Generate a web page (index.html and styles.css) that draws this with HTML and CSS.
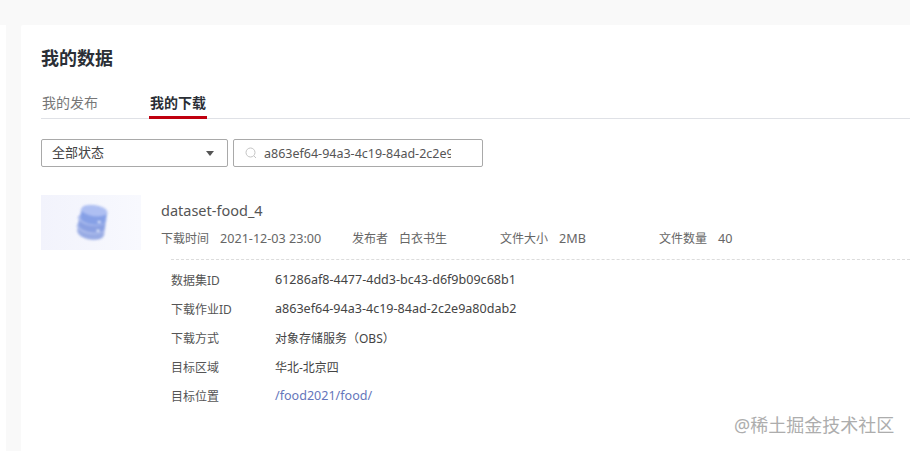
FILE: index.html
```html
<!DOCTYPE html>
<html lang="zh-CN">
<head>
<meta charset="utf-8">
<title>我的数据</title>
<link rel="stylesheet" href="styles.css">
</head>
<body>
<div class="page">
  <aside class="side"></aside>
  <main class="card">
    <h1 class="title">我的数据</h1>
    <nav class="tabs">
      <span class="tab">我的发布</span>
      <span class="tab active">我的下载</span>
    </nav>
    <div class="filters">
      <div class="select"><span>全部状态</span><i class="caret"></i></div>
      <div class="search">
        <svg class="search-icon" width="12" height="12" viewBox="0 0 12 12"><circle cx="5.5" cy="5.5" r="4.5" fill="none" stroke="#c4c4c4"/><path d="M9 9l2 2" stroke="#c4c4c4"/></svg>
        <span class="search-text">a863ef64-94a3-4c19-84ad-2c2e9a80dab2</span>
      </div>
    </div>
    <section class="item">
      <div class="thumb">
        <svg class="thumb-icon" width="39" height="39" viewBox="0 0 36 48" preserveAspectRatio="none">
          <path d="M6 30v6c0 5 6 9 13 9s12-3 12-8v-7z" fill="#98abe4"/>
          <ellipse cx="18" cy="30" rx="13" ry="8" fill="#b3c1ee"/>
          <path d="M6 20v8c0 5 6 8 13 8s12-3 12-8v-8z" fill="#8ba1e2"/>
          <ellipse cx="18" cy="20" rx="13" ry="8" fill="#adbdee"/>
          <path d="M7 9v9c0 5 5 8 12 8s12-3 12-8V9z" fill="#86a0e6"/>
          <ellipse cx="19" cy="9" rx="12" ry="7" fill="#aebff2"/>
          <circle cx="25" cy="22" r="1.5" fill="#e6ecfb"/>
          <circle cx="25" cy="33" r="1.5" fill="#e6ecfb"/>
        </svg>
      </div>
      <div class="info">
        <div class="name">dataset-food_4</div>
        <div class="meta">
          <span class="meta-cell c1"><span class="k">下载时间</span><span class="v">2021-12-03 23:00</span></span>
          <span class="meta-cell c2"><span class="k">发布者</span><span class="v">白衣书生</span></span>
          <span class="meta-cell c3"><span class="k">文件大小</span><span class="v">2MB</span></span>
          <span class="meta-cell c4"><span class="k">文件数量</span><span class="v">40</span></span>
        </div>
      </div>
    </section>
    <dl class="details">
      <div class="row"><dt>数据集ID</dt><dd>61286af8-4477-4dd3-bc43-d6f9b09c68b1</dd></div>
      <div class="row"><dt>下载作业ID</dt><dd>a863ef64-94a3-4c19-84ad-2c2e9a80dab2</dd></div>
      <div class="row"><dt>下载方式</dt><dd class="cjk">对象存储服务（OBS）</dd></div>
      <div class="row"><dt>目标区域</dt><dd class="cjk">华北-北京四</dd></div>
      <div class="row"><dt>目标位置</dt><dd class="link">/food2021/food/</dd></div>
    </dl>
  </main>
</div>
<div class="watermark">@稀土掘金技术社区</div>
</body>
</html>
```
FILE: styles.css
```css
* { box-sizing: border-box; }
html, body { margin: 0; height: 100%; overflow: hidden; }
body {
  background: #f9f9f9;
  font-family: "Noto Sans", "Noto Sans CJK SC", sans-serif;
  font-size: 12px;
  color: #555;
  position: relative;
}
.page { display: flex; padding-top: 25px; height: 451px; }
.side { width: 6px; background: #fff; flex: none; }
.card {
  margin-left: 15px;
  flex: 1;
  background: #fff;
  border-radius: 2px 0 0 0;
  padding: 17px 0 0 20px;
}
.title {
  margin: 0;
  font-size: 18px;
  line-height: 32px;
  font-weight: 700;
  color: #2b2f36;
}
.tabs {
  display: flex;
  gap: 51px;
  margin-top: 15px;
  height: 30px;
  border-bottom: 1px solid #dfe1e6;
  padding-left: 1px;
}
.tab { font-size: 14px; line-height: 28px; color: #777; height: 30px; width: 57px; }
.tab.active {
  font-weight: 700;
  color: #2b2f36;
  border-bottom: 3px solid #c0000f;
  margin-left: -1px;
  padding-left: 1px;
  width: 58px;
}
.filters { display: flex; gap: 5px; margin-top: 20px; }
.select, .search {
  height: 28px;
  border: 1px solid #a9a9a9;
  border-radius: 2px;
  display: flex;
  align-items: center;
  background: #fff;
  font-size: 13px;
}
.select {
  width: 187px;
  padding: 0 13px 3px 10px;
  justify-content: space-between;
  color: #444;
}
.caret {
  width: 0;
  height: 0;
  margin-top: 3px;
  border-left: 4px solid transparent;
  border-right: 4px solid transparent;
  border-top: 5px solid #555;
}
.search { width: 250px; padding-left: 11px; gap: 7px; }
.search-text {
  width: 187px;
  overflow: hidden;
  white-space: nowrap;
  font-size: 12.5px;
  color: #555;
}
.item { display: flex; margin-top: 28px; }
.thumb {
  width: 100px;
  height: 55px;
  background: linear-gradient(90deg, #f2f3fc, #f8f9fe);
  display: flex;
  align-items: center;
  justify-content: center;
  flex: none;
}
.thumb-icon { filter: blur(1px); transform: rotate(8deg); }
.info { margin-left: 20px; flex: 1; }
.name { font-size: 14.5px; line-height: 20px; margin-top: 5px; color: #555; }
.meta { display: flex; margin-top: 10px; line-height: 18px; color: #666; }
.meta-cell { display: flex; gap: 11px; white-space: nowrap; }
.v { font-size: 12.6px; }
.c1 { width: 191px; }
.c2 { width: 148px; }
.c2 .v { font-size: 12px; }
.c3 { width: 159px; }
.details {
  margin: 9px 0 0 130px;
  padding-top: 5px;
  border-top: 1px dashed #dcdcdc;
}
.row { display: flex; height: 29px; align-items: center; }
.row dt { width: 104px; color: #555; }
.row dd { margin: 0; color: #444; font-size: 12.55px; }
.row dd.cjk { font-size: 12px; }
.row dd.link { color: #6576bb; }
.watermark {
  position: absolute;
  left: 734px;
  top: 413px;
  font-size: 18px;
  line-height: 24px;
  color: #adadad;
  white-space: nowrap;
}
```
